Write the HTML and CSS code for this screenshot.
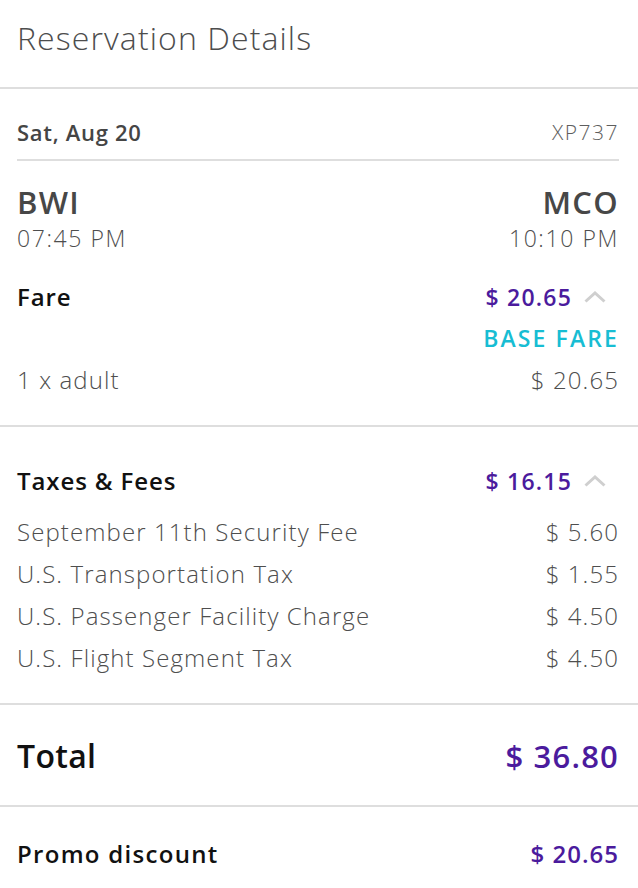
FILE: index.html
```html
<!DOCTYPE html>
<html>
<head>
<meta charset="utf-8">
<link rel="stylesheet" href="styles.css">
</head>
<body>
<div class="page">
  <header class="header">
    <h1 class="title">Reservation Details</h1>
  </header>

  <section class="section flight">
    <div class="date-row">
      <span class="date">Sat, Aug 20</span>
      <span class="flight-no">XP737</span>
    </div>
    <div class="airports">
      <div class="ap">
        <div class="code">BWI</div>
        <div class="time">07:45 PM</div>
      </div>
      <div class="ap ap-right">
        <div class="code">MCO</div>
        <div class="time">10:10 PM</div>
      </div>
    </div>
    <div class="row head-row fare-head">
      <span class="label">Fare</span>
      <span class="amount-wrap"><span class="amount">$ 20.65</span><svg class="chev" width="22" height="12" viewBox="0 0 22 12"><polyline points="1.5,10.5 11,2 20.5,10.5" fill="none" stroke="#cfcfcf" stroke-width="3"/></svg></span>
    </div>
    <div class="base-fare">BASE FARE</div>
    <div class="row item adult">
      <span>1 x adult</span>
      <span>$ 20.65</span>
    </div>
  </section>

  <section class="section taxes">
    <div class="row head-row">
      <span class="label">Taxes &amp; Fees</span>
      <span class="amount-wrap"><span class="amount">$ 16.15</span><svg class="chev" width="22" height="12" viewBox="0 0 22 12"><polyline points="1.5,10.5 11,2 20.5,10.5" fill="none" stroke="#cfcfcf" stroke-width="3"/></svg></span>
    </div>
    <div class="tax-list">
      <div class="row item tax"><span>September 11th Security Fee</span><span>$ 5.60</span></div>
      <div class="row item tax"><span>U.S. Transportation Tax</span><span>$ 1.55</span></div>
      <div class="row item tax"><span>U.S. Passenger Facility Charge</span><span>$ 4.50</span></div>
      <div class="row item tax"><span>U.S. Flight Segment Tax</span><span>$ 4.50</span></div>
    </div>
  </section>

  <section class="section total">
    <div class="row total-row">
      <span class="label">Total</span>
      <span class="amount">$ 36.80</span>
    </div>
  </section>

  <section class="section promo">
    <div class="row promo-row">
      <span class="label">Promo discount</span>
      <span class="amount">$ 20.65</span>
    </div>
  </section>
</div>
</body>
</html>
```

FILE: styles.css
```css
* { box-sizing: border-box; }
html, body { margin: 0; padding: 0; background: #fff; }
body {
  font-family: "Open Sans", "Lato", sans-serif;
  color: #4e4e4e;
  width: 638px;
  height: 888px;
  overflow: hidden;
}
.page { width: 638px; }

.header {
  height: 89px;
  padding: 20px 20px 0 17px;
  border-bottom: 2px solid #dedede;
}
.title {
  margin: 0;
  font-size: 32px;
  font-weight: 300;
  line-height: 36px;
  letter-spacing: 1.1px;
  color: #4d4d4d;
}

.section {
  padding: 0 19px 0 17px;
  border-bottom: 2px solid #dedede;
}

.row {
  display: flex;
  justify-content: space-between;
  align-items: center;
}

.date-row {
  display: flex;
  justify-content: space-between;
  align-items: center;
  padding-top: 30px;
  padding-bottom: 14px;
  border-bottom: 2px solid #dedede;
  line-height: 26px;
}
.date { font-size: 22px; font-weight: 600; letter-spacing: 0.7px; color: #454545; }
.flight-no { font-size: 21px; font-weight: 300; letter-spacing: 1.5px; color: #5e5e5e; }

.airports {
  display: flex;
  justify-content: space-between;
  margin-top: 23px;
}
.ap-right { text-align: right; }
.code { font-size: 31px; font-weight: 600; line-height: 36px; letter-spacing: 1.3px; color: #474747; }
.time { font-size: 23px; font-weight: 300; line-height: 30px; letter-spacing: 1.6px; margin-top: 3px; color: #4e4e4e; }

.head-row { line-height: 30px; }
.fare-head { margin-top: 29px; }
.label { color: #111; font-weight: 600; }
.head-row .label { font-size: 24px; letter-spacing: 0.9px; }
.amount { color: #4b1b9d; font-weight: 600; }
.head-row .amount { font-size: 23px; letter-spacing: 1.2px; }
.amount-wrap { display: flex; align-items: center; }
.chev { margin-left: 12px; margin-right: 13px; display: block; }

.base-fare {
  text-align: right;
  margin-top: 11px;
  font-size: 23px;
  font-weight: 600;
  line-height: 30px;
  letter-spacing: 2.1px;
  color: #17bdd3;
}
.item { font-size: 24px; font-weight: 300; letter-spacing: 1.1px; color: #4e4e4e; }
.adult { margin-top: 12px; line-height: 30px; padding-bottom: 30px; }

.taxes .head-row { margin-top: 39px; }
.tax-list { margin-top: 15px; padding-bottom: 24px; }
.tax { line-height: 42px; }

.total-row { line-height: 40px; padding: 31px 0 29px; }
.total-row .label { font-size: 32px; font-weight: 600; letter-spacing: 0.3px; }
.total-row .amount { font-size: 31px; letter-spacing: 1.2px; }

.promo { border-bottom: none; }
.promo-row { line-height: 30px; padding-top: 32px; }
.promo-row .label { font-size: 24px; letter-spacing: 1.3px; }
.promo-row .amount { font-size: 24px; letter-spacing: 1px; }
```
